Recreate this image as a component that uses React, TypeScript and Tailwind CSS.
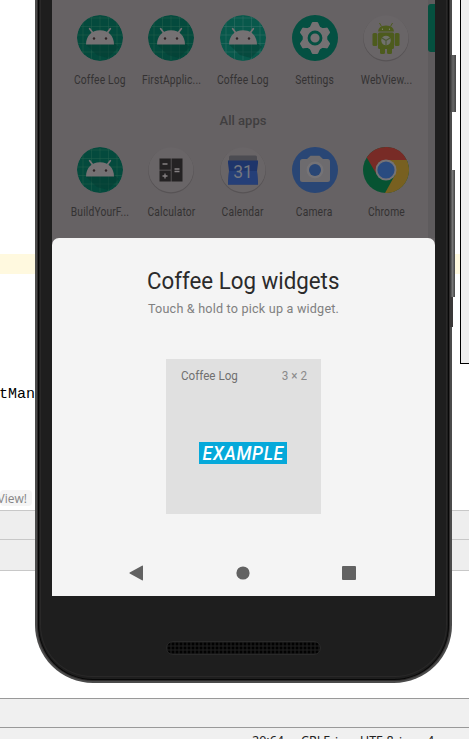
import type { ReactNode } from "react";

function AndroidIcon({ light = false }: { light?: boolean }) {
  const lines = [6, 14.5, 23, 31.5, 40];
  return (
    <svg viewBox="0 0 46 46" className="size-[46px] rounded-full">
      <circle cx="23" cy="23" r="23" fill={light ? "#08584b" : "#044a3d"} />
      <g stroke={light ? "#397168" : "#24604f"} strokeWidth="0.5">
        {lines.map((n) => (
          <path key={n} d={`M${n} 0V46M0 ${n - 3}H46`} />
        ))}
      </g>
      <path d="M9 29.500L20 40L31 43L42 32L37 28Z" fill="#033b31" opacity="0.5" />
      <path d="M15.500 17.500L12.700 13.800M30.500 17.500L33.300 13.800" fill="none" stroke="#757173" strokeWidth="1.800" strokeLinecap="round" />
      <path d="M9 29.500C9 21 14.500 15.300 23 15.300S37 21 37 29.500Z" fill="#757173" />
      <circle cx="17" cy="23.500" r="1.200" fill="#302526" />
      <circle cx="29" cy="23.500" r="1.200" fill="#302526" />
    </svg>
  );
}

function SettingsIcon() {
  return (
    <svg viewBox="0 0 46 46" className="size-[46px]">
      <circle cx="23" cy="23" r="23" fill="#045042" />
      <g fill="#757173">
        <circle cx="23" cy="23" r="12.300" />
        {[0, 60, 120, 180, 240, 300].map((a) => (
          <path key={a} d="M17.500 13L19.700 8Q20 7 21 7H25Q26 7 26.300 8L28.500 13Z" transform={`rotate(${a} 23 23)`} />
        ))}
      </g>
      <circle cx="23" cy="23" r="6" fill="none" stroke="#045042" strokeWidth="2.800" />
    </svg>
  );
}

function Disc({ children }: { children: ReactNode }) {
  return (
    <svg viewBox="0 0 46 46" className="size-[46px] overflow-visible">
      <circle cx="23" cy="23.700" r="22.800" fill="#575355" />
      <circle cx="23" cy="22.800" r="22.500" fill="#696567" />
      {children}
    </svg>
  );
}

function WebViewIcon() {
  return (
    <Disc>
      <g fill="#4d5b1d">
        <path d="M15 16.500Q15.500 10.500 23 10.500T31 16.500Z" />
        <path d="M18.500 11.500L16.500 8M27.500 11.500L29.500 8" stroke="#4d5b1d" strokeWidth="1" />
        <rect x="15" y="17.500" width="16" height="16.500" rx="1.500" />
        <rect x="9.500" y="18" width="4.800" height="13" rx="1.500" />
        <rect x="31.700" y="18" width="4.800" height="13" rx="1.500" />
        <rect x="17" y="32" width="5" height="7" rx="1.500" />
        <rect x="24" y="32" width="5" height="7" rx="1.500" />
      </g>
      <circle cx="19.500" cy="14.200" r=".6" fill="#8b8b7c" />
      <circle cx="26.500" cy="14.200" r=".6" fill="#8b8b7c" />
      <circle cx="23" cy="25.500" r="4.800" fill="#70716b" />
      <path d="M19 23L23 25.500L27 23M23 25.500V30" fill="none" stroke="#4b5833" strokeWidth="1.100" />
    </Disc>
  );
}

function CalculatorIcon() {
  return (
    <Disc>
      <path d="M11.500 11.500H22.800V22.800H11.500ZM11.500 23.400H22.800V34.500H11.500ZM23.500 11.500H34.500V34.500H23.500Z" fill="#242223" />
      <path d="M14.500 17H19.500M17 26.500V31.500M14.500 29H19.500M26.500 22H31.500M26.500 24.500H31.500" stroke="#858183" strokeWidth="1.300" />
    </Disc>
  );
}

function CalendarIcon() {
  return (
    <Disc>
      <path d="M9 10Q9 8.500 10.500 8.500H35.500Q37 8.500 37 10V14H9Z" fill="#4c4c52" />
      <path d="M8 13.500H38V16L37 24L38 37.500H8L9 24L8 16Z" fill="#1e356b" />
      <path d="M9 24H37L38 37.500H8Z" fill="#253f78" />
      <text x="23" y="30.500" textAnchor="middle" fill="#74777f" className="font-['Roboto',sans-serif] text-[17.5px]">31</text>
    </Disc>
  );
}

function CameraIcon() {
  return (
    <svg viewBox="0 0 46 46" className="size-[46px]">
      <circle cx="23" cy="23" r="23" fill="#294675" />
      <path d="M10.500 12H15L18.500 8.800H27.500L31 12H35.500Q38 12 38 14.500V32.500Q38 35 35.500 35H10.500Q8 35 8 32.500V14.500Q8 12 10.500 12Z" fill="#6d6b6e" />
      <circle cx="23" cy="23" r="8.500" fill="#757376" />
      <circle cx="23" cy="23" r="6" fill="#294675" />
    </svg>
  );
}

function ChromeIcon() {
  return (
    <svg viewBox="0 0 46 46" className="size-[46px]">
      <circle cx="23" cy="23" r="23" fill="#075332" />
      <path d="M23 13H43.700A23 23 0 0 1 22 46L32 28Z" fill="#786020" />
      <path d="M3.700 10.500A23 23 0 0 1 43.700 13H23L14 28Z" fill="#782b26" />
      <circle cx="23" cy="23" r="10.500" fill="#757376" />
      <circle cx="23" cy="23" r="8.600" fill="#294b80" />
    </svg>
  );
}

function AppTile({ label, children }: { label: string; children: ReactNode }) {
  return (
    <div className="flex flex-col items-center gap-[11px]">
      {children}
      <span className="scale-x-[.79] text-[13px] leading-4 tracking-[.2px] whitespace-nowrap text-[#343233]">{label}</span>
    </div>
  );
}

function WidgetSheet() {
  return (
    <section className="relative flex h-[358px] flex-col items-center rounded-t-[7px] bg-[#f4f4f4] pt-[29px]">
      <h1 className="scale-x-[.97] text-[23px] leading-[30px] whitespace-nowrap text-[#2b2b2b]">Coffee Log widgets</h1>
      <p className="mt-1 scale-x-[.97] text-[13px] leading-4 tracking-[.2px] whitespace-nowrap text-[#808080]">Touch &amp; hold to pick up a widget.</p>
      <div className="mt-[42px] mr-px flex h-[155px] w-[155px] shrink-0 flex-col items-center bg-[#e0e0e0] pt-[9px]">
        <div className="flex w-full justify-between pr-[14px] pl-[15px] text-[13px] leading-4 text-[#707070]">
          <span className="origin-left scale-x-[.895] whitespace-nowrap">Coffee Log</span>
          <span className="origin-right scale-x-[.9] whitespace-nowrap text-[#8a8a8a]">3 × 2</span>
        </div>
        <div className="mt-[58px] flex h-[22px] w-[88px] items-center justify-center bg-[#06a9da]">
          <span className="scale-x-[.88] text-[20px] leading-[22px] font-medium tracking-[.8px] text-white italic">EXAMPLE</span>
        </div>
      </div>
      <nav className="mt-[51px] flex w-full justify-between pr-[79px] pl-[77px]">
        <svg viewBox="0 0 14 16" className="h-4 w-3.5" fill="#626262"><path d="M13 .8Q14 .2 14 1.500V14.500Q14 15.800 13 15.200L.7 8.600Q0 8 .7 7.400Z" /></svg>
        <svg viewBox="0 0 14 16" className="h-4 w-3.5" fill="#626262"><circle cx="7" cy="8" r="6.600" /></svg>
        <svg viewBox="0 0 14 16" className="h-4 w-3.5" fill="#626262"><rect y="1" width="14" height="14" rx="1" /></svg>
      </nav>
    </section>
  );
}

function Phone() {
  return (
    <div className="absolute top-0 left-[35px] h-[683px] w-[421px] font-['Roboto',sans-serif]">
      <div className="absolute top-[55px] right-0 h-[57px] w-[6px] bg-linear-to-r from-[#333] via-[#666] to-[#444]" />
      <div className="absolute top-[170px] right-[1px] h-[127px] w-[5px] bg-linear-to-r from-[#333] via-[#777] to-[#444]" />
      <div className="absolute top-[297px] right-[3px] h-[30px] w-[3px] bg-[#3a3838]" />
      <div className="h-[683px] w-[417px] rounded-b-[58px] bg-[#4b4b4b] px-[2px] pb-[2px]">
        <div className="h-full rounded-b-[56px] bg-[#2e2c2c] px-[1px] pb-[1px]">
          <div className="h-full rounded-b-[55px] border-x border-b border-[#080808] bg-[#1e1e1e] px-[1px] pb-[2px]">
            <div className="flex h-full flex-col rounded-b-[52px] border-x border-b border-[#292828] px-[11px]">
              <div className="flex h-[596px] w-[383px] shrink-0 flex-col self-center bg-[#666264]">
                <div className="flex h-[238px] justify-between bg-[#666264]">
                  <div className="ml-3 w-[358px] pt-[15px]">
                    <div className="grid grid-cols-5">
                      <AppTile label="Coffee Log"><AndroidIcon /></AppTile>
                      <AppTile label="FirstApplic..."><AndroidIcon /></AppTile>
                      <AppTile label="Coffee Log"><AndroidIcon light /></AppTile>
                      <AppTile label="Settings"><SettingsIcon /></AppTile>
                      <AppTile label="WebView..."><WebViewIcon /></AppTile>
                    </div>
                    <h2 className="mt-[25px] text-center text-[13px] leading-4 font-medium text-[#403e3f]">All apps</h2>
                    <div className="mt-[18px] grid grid-cols-5">
                      <AppTile label="BuildYourF..."><AndroidIcon /></AppTile>
                      <AppTile label="Calculator"><CalculatorIcon /></AppTile>
                      <AppTile label="Calendar"><CalendarIcon /></AppTile>
                      <AppTile label="Camera"><CameraIcon /></AppTile>
                      <AppTile label="Chrome"><ChromeIcon /></AppTile>
                    </div>
                  </div>
                  <div className="w-[7px] bg-[#5e5b5d] pt-1"><div className="h-12 rounded-l-[3px] bg-[#05503f]" /></div>
                </div>
                <WidgetSheet />
              </div>
              <div className="mt-[45px] h-[14px] w-[155px] self-center rounded-full border border-[#292929] bg-[#111] bg-[radial-gradient(circle,#020202_35%,#191919_65%)] bg-[size:4px_4px]" />
            </div>
          </div>
        </div>
      </div>
    </div>
  );
}

export default function App() {
  return (
    <main className="relative flex h-[739px] w-[469px] flex-col overflow-hidden bg-white">
      <div className="mt-[254px] h-5 shrink-0 bg-[#fff9df]" />
      <div className="mt-[112px] h-5 w-[35px] shrink-0"><span className="float-right font-['Liberation_Mono',monospace] text-[15px] leading-[18px] text-black">tMan</span></div>
      <div className="mt-[84px] flex h-[16px] w-8 shrink-0 justify-end rounded bg-[#f5f5f5] pr-[5px] font-['Open_Sans',sans-serif] text-[12px] leading-[17px] text-[#858585]"><span className="whitespace-nowrap">View!</span></div>
      <div className="mt-1 h-[30px] shrink-0 border-y border-[#c8c8c8] bg-[#eee]" />
      <div className="h-[31px] shrink-0 border-b border-[#c8c8c8] bg-[#eee]" />
      <div className="mt-[127px] h-[30px] shrink-0 border-y border-[#999] bg-[#f0f0f0]" />
      <footer className="flex h-[11px] shrink-0 overflow-hidden bg-[#f0f0f0] pt-[5px] pl-[252px] font-['Noto_Sans',sans-serif] text-[12.5px] leading-4 whitespace-pre text-[#222]">
        <span className="w-[49px]">20:64</span><span className="w-[59px]">CRLF ÷</span><span className="w-[67px]">UTF-8 ÷</span><span>4</span>
      </footer>
      <aside className="absolute top-0 right-0 h-[364px] w-[9px] border-b border-l border-black bg-[#eee]" />
      <Phone />
    </main>
  );
}
